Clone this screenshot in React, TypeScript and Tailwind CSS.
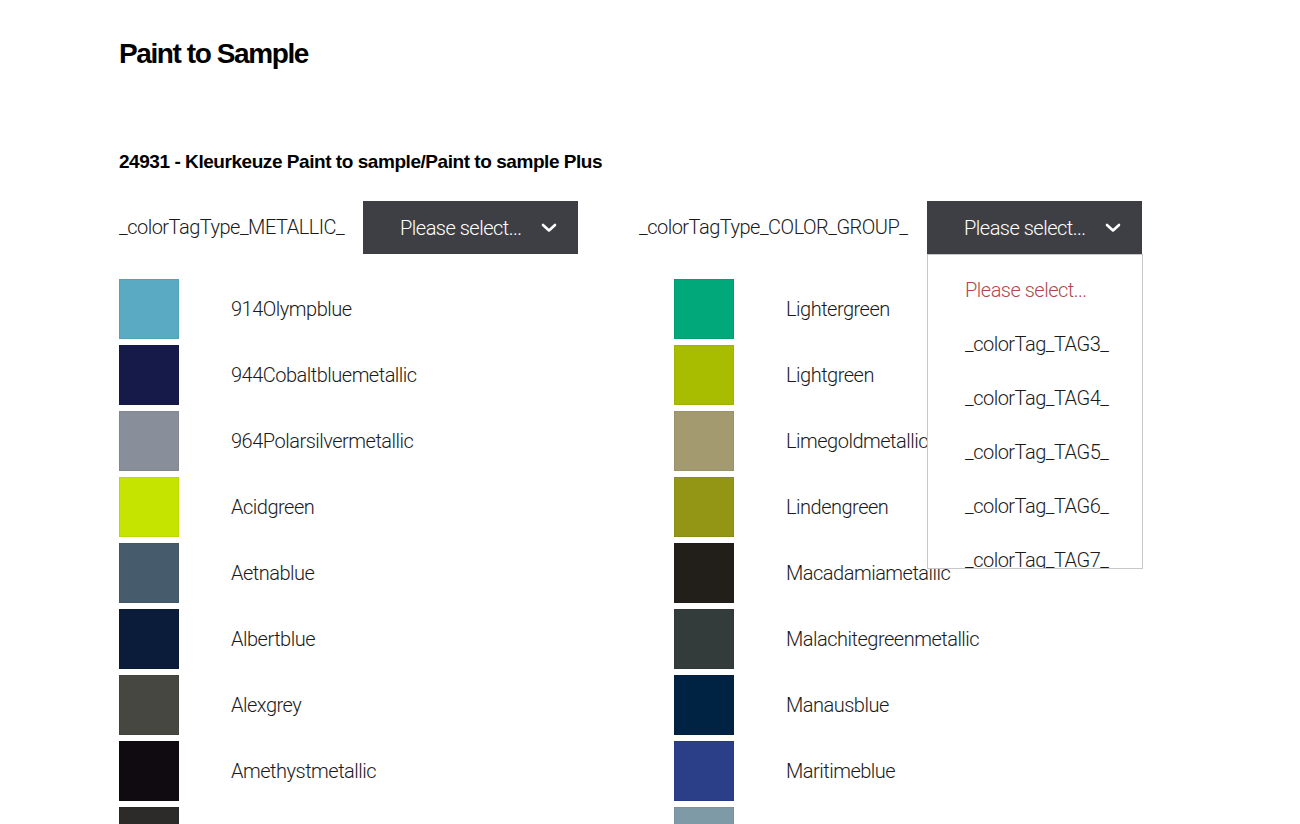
import { useState } from "react";

const left = [
  { name: "914Olympblue", color: "#5aaac4" },
  { name: "944Cobaltbluemetallic", color: "#151a48" },
  { name: "964Polarsilvermetallic", color: "#888f9a" },
  { name: "Acidgreen", color: "#c5e500" },
  { name: "Aetnablue", color: "#465c6c" },
  { name: "Albertblue", color: "#0a1c3a" },
  { name: "Alexgrey", color: "#474742" },
  { name: "Amethystmetallic", color: "#100b10" },
  { name: "Anthracitebrown", color: "#2d2a2a" },
];

const right = [
  { name: "Lightergreen", color: "#00a87a" },
  { name: "Lightgreen", color: "#a9bd00" },
  { name: "Limegoldmetallic", color: "#a39a6f" },
  { name: "Lindengreen", color: "#939615" },
  { name: "Macadamiametallic", color: "#221e19" },
  { name: "Malachitegreenmetallic", color: "#333c3a" },
  { name: "Manausblue", color: "#002344" },
  { name: "Maritimeblue", color: "#2b3e88" },
  { name: "Meissenblue", color: "#7f9aa7" },
];

const options = [
  "_colorTag_TAG3_",
  "_colorTag_TAG4_",
  "_colorTag_TAG5_",
  "_colorTag_TAG6_",
  "_colorTag_TAG7_",
  "_colorTag_TAG8_",
];

function Chevron() {
  return (
    <svg width="16" height="10" viewBox="0 0 16 10" fill="none">
      <path
        d="M2 2l6 5.5L14 2"
        stroke="white"
        strokeWidth="2.6"
        strokeLinecap="round"
        strokeLinejoin="round"
      />
    </svg>
  );
}

function Select({ open }: { open?: boolean }) {
  return (
    <div className="relative">
      <button className="flex h-[53px] w-[215px] items-center justify-between bg-[#3e3f44] pl-[37px] pr-[21px] text-[20px] font-light text-white">
        <span className="tracking-[-0.5px]">Please select...</span>
        <Chevron />
      </button>
      {open && (
        <div className="absolute left-0 top-[53px] z-10 h-[315px] w-[216px] overflow-hidden border border-[#c8c8c8] bg-white pt-2">
          <div className="flex h-[54px] items-center pl-[37px] text-[20px] font-light tracking-[-0.5px] text-[#b0474c]">
            Please select...
          </div>
          {options.map((o) => (
            <div
              key={o}
              className="flex h-[54px] items-center pl-[37px] text-[20px] font-light tracking-[-0.5px] text-[#1a1a1a]"
            >
              {o}
            </div>
          ))}
        </div>
      )}
    </div>
  );
}

function Swatches({ items }: { items: { name: string; color: string }[] }) {
  return (
    <div className="flex flex-col gap-[6px]">
      {items.map((c) => (
        <div key={c.name} className="flex items-center">
          <div
            className="h-[60px] w-[60px] shrink-0 border border-black/5"
            style={{ background: c.color }}
          />
          <span className="ml-[52px] text-[20px] font-light tracking-[-0.5px] text-[#1a1a1a]">
            {c.name}
          </span>
        </div>
      ))}
    </div>
  );
}

export default function App() {
  const [open] = useState(true);
  return (
    <div className="h-[824px] overflow-hidden bg-white font-['Roboto',sans-serif]">
      <div className="pl-[119px] pt-[35px]">
        <h1 className="font-['Liberation_Sans',sans-serif] text-[28px] font-bold leading-[38px] tracking-[-1.4px] text-black">
          Paint to Sample
        </h1>
        <h2 className="mt-[75px] font-['Liberation_Sans',sans-serif] text-[19px] font-bold leading-[28px] tracking-[-0.45px] text-black">
          24931 - Kleurkeuze Paint to sample/Paint to sample Plus
        </h2>

        <div className="mt-[25px] flex">
          <div className="flex w-[520px]">
            <span className="w-[244px] pt-[11px] text-[20px] font-light tracking-[-0.5px] text-[#1a1a1a]">
              _colorTagType_METALLIC_
            </span>
            <Select />
          </div>
          <div className="flex">
            <span className="w-[288px] pt-[11px] text-[20px] font-light tracking-[-0.5px] text-[#1a1a1a]">
              _colorTagType_COLOR_GROUP_
            </span>
            <Select open={open} />
          </div>
        </div>

        <div className="mt-[25px] flex">
          <div className="w-[555px]">
            <Swatches items={left} />
          </div>
          <Swatches items={right} />
        </div>
      </div>
    </div>
  );
}
